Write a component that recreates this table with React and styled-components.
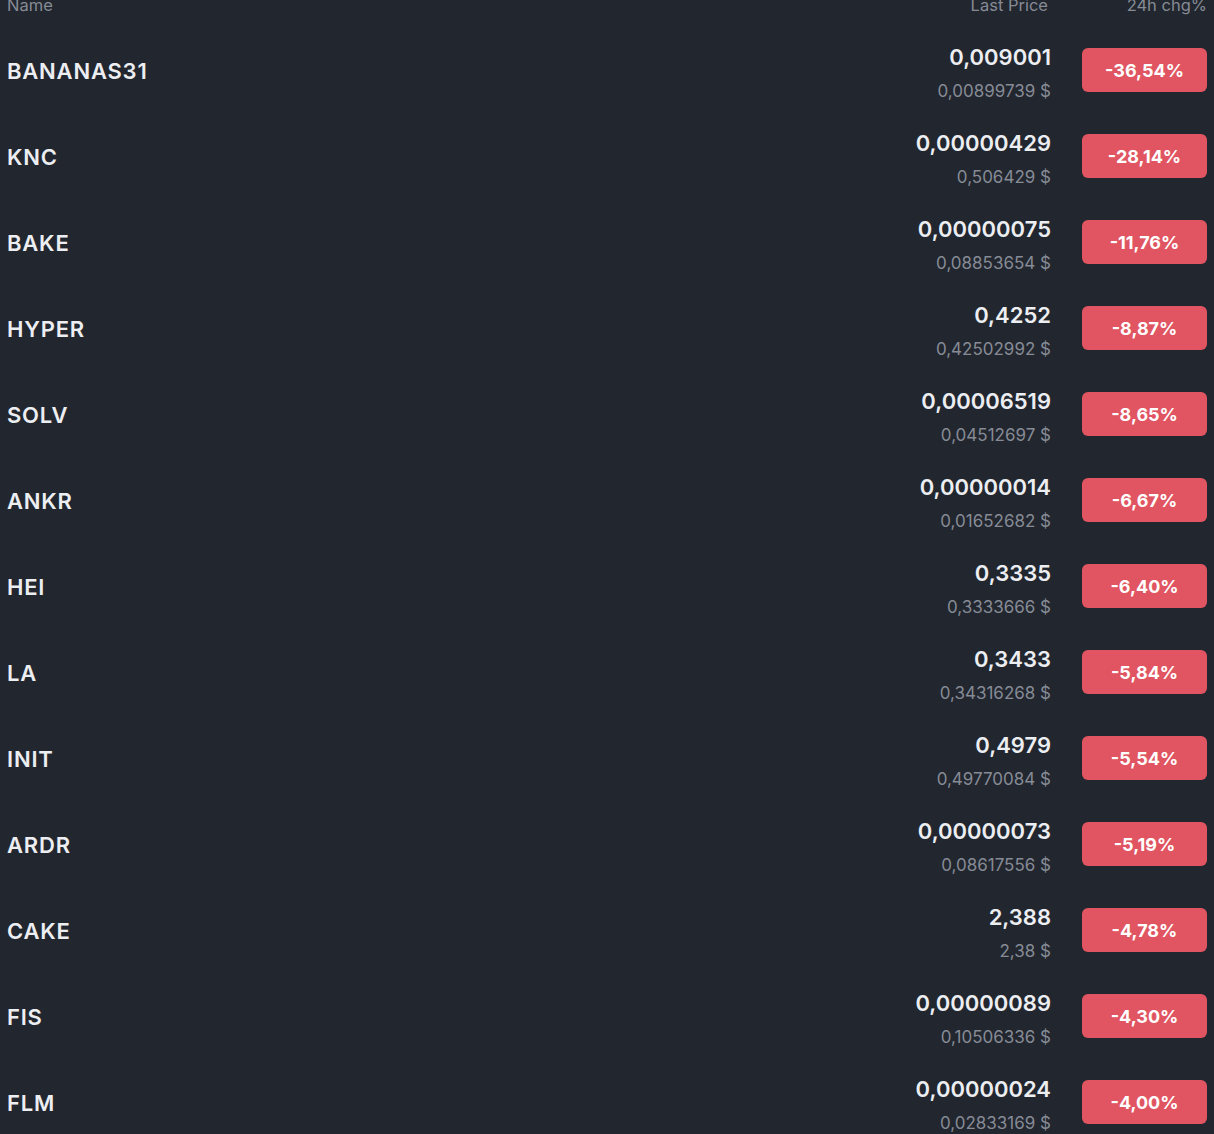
import styled, { createGlobalStyle } from 'styled-components'

const rows = [
  { name: 'BANANAS31', price: '0,009001', usd: '0,00899739 $', chg: '-36,54%' },
  { name: 'KNC', price: '0,00000429', usd: '0,506429 $', chg: '-28,14%' },
  { name: 'BAKE', price: '0,00000075', usd: '0,08853654 $', chg: '-11,76%' },
  { name: 'HYPER', price: '0,4252', usd: '0,42502992 $', chg: '-8,87%' },
  { name: 'SOLV', price: '0,00006519', usd: '0,04512697 $', chg: '-8,65%' },
  { name: 'ANKR', price: '0,00000014', usd: '0,01652682 $', chg: '-6,67%' },
  { name: 'HEI', price: '0,3335', usd: '0,3333666 $', chg: '-6,40%' },
  { name: 'LA', price: '0,3433', usd: '0,34316268 $', chg: '-5,84%' },
  { name: 'INIT', price: '0,4979', usd: '0,49770084 $', chg: '-5,54%' },
  { name: 'ARDR', price: '0,00000073', usd: '0,08617556 $', chg: '-5,19%' },
  { name: 'CAKE', price: '2,388', usd: '2,38 $', chg: '-4,78%' },
  { name: 'FIS', price: '0,00000089', usd: '0,10506336 $', chg: '-4,30%' },
  { name: 'FLM', price: '0,00000024', usd: '0,02833169 $', chg: '-4,00%' },
]

export default function App() {
  return (
    <>
      <GlobalStyle />
      <Table>
        <HeaderRow>
          <HeadCell>Name</HeadCell>
          <HeadCell align="right">Last Price</HeadCell>
          <HeadCell align="right">24h chg%</HeadCell>
        </HeaderRow>
        {rows.map((r) => (
          <Row key={r.name}>
            <Name>{r.name}</Name>
            <PriceCell>
              <Price>{r.price}</Price>
              <Usd>{r.usd}</Usd>
            </PriceCell>
            <ChangeBadge>{r.chg}</ChangeBadge>
          </Row>
        ))}
      </Table>
    </>
  )
}

const GlobalStyle = createGlobalStyle`
  html, body {
    margin: 0;
    background: #22262f;
    overflow: hidden;
  }
  body {
    font-family: Inter, "Liberation Sans", sans-serif;
    color: #eceef2;
  }
`

const Table = styled.div`
  display: flex;
  flex-direction: column;
  padding: 0 7px;
  margin-top: -5px;
`

const grid = `
  display: grid;
  grid-template-columns: 1fr 260px 156px;
  align-items: center;
`

const HeaderRow = styled.div`
  ${grid}
  height: 32px;
  align-items: start;
`

const HeadCell = styled.div`
  font-size: 16.5px;
  line-height: 20px;
  color: #868b95;
  text-align: ${(p) => p.align || 'left'};
  padding-right: ${(p) => (p.align ? '3px' : '0')};
  &:last-child {
    padding-right: 0;
  }
`

const Row = styled.div`
  ${grid}
  height: 86px;
`

const Name = styled.div`
  font-size: 22px;
  font-weight: 600;
  letter-spacing: 0.8px;
  padding-top: 2px;
`

const PriceCell = styled.div`
  display: flex;
  flex-direction: column;
  align-items: flex-end;
  gap: 13px;
  padding-top: 7px;
`

const Price = styled.div`
  font-size: 22px;
  line-height: 22px;
  font-weight: 600;
`

const Usd = styled.div`
  font-size: 17px;
  line-height: 20px;
  color: #868b95;
`

const ChangeBadge = styled.div`
  justify-self: end;
  width: 125px;
  height: 44px;
  box-sizing: border-box;
  display: flex;
  align-items: center;
  justify-content: center;
  background: #e05561;
  border-radius: 6px;
  font-size: 18px;
  font-weight: 700;
  color: #fff;
`
